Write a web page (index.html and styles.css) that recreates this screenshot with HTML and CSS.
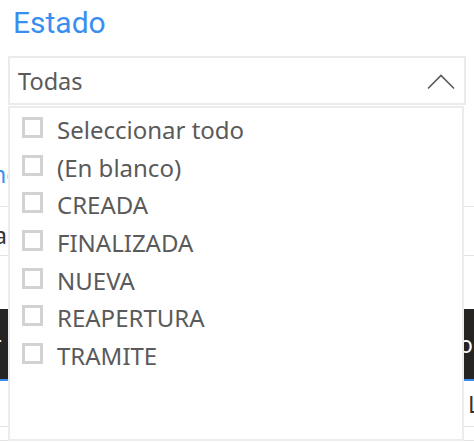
FILE: index.html
```html
<!DOCTYPE html>
<html lang="es">
<head>
<meta charset="utf-8">
<title>Estado</title>
<link rel="stylesheet" href="styles.css">
</head>
<body>
<div class="page">
  <h1 class="title">Estado</h1>
  <div class="dropdown">
    <span class="dropdown-value">Todas</span>
    <svg class="chevron" width="28" height="16" viewBox="0 0 28 16"><polyline points="1,14.5 14,1.5 27,14.5" fill="none" stroke="#5a5a5a" stroke-width="1.6"/></svg>
  </div>
  <div class="behind">
    <div class="bg-row bg-row-title"><span class="bg-blue">no</span></div>
    <div class="bg-row bg-row-a"><span class="bg-dark">a</span></div>
    <div class="bg-gap"></div>
    <div class="bg-bar"><span class="bar-left">r</span><span class="bar-right">o</span></div>
    <div class="bg-row bg-row-l"><span class="bg-l">L</span></div>
    <div class="bg-row bg-row-last"></div>
  </div>
  <ul class="list">
    <li class="item"><span class="box"></span><span class="label">Seleccionar todo</span></li>
    <li class="item"><span class="box"></span><span class="label">(En blanco)</span></li>
    <li class="item"><span class="box"></span><span class="label">CREADA</span></li>
    <li class="item"><span class="box"></span><span class="label">FINALIZADA</span></li>
    <li class="item"><span class="box"></span><span class="label">NUEVA</span></li>
    <li class="item"><span class="box"></span><span class="label">REAPERTURA</span></li>
    <li class="item"><span class="box"></span><span class="label">TRAMITE</span></li>
  </ul>
</div>
</body>
</html>
```
FILE: styles.css
```css
* { box-sizing: border-box; }
html, body { margin: 0; padding: 0; background: #fff; }
body { font-family: "Noto Sans", "Open Sans", sans-serif; overflow: hidden; }
.page { position: relative; width: 474px; height: 442px; overflow: hidden; }

.title {
  margin: 0;
  padding: 3px 0 0 13px;
  height: 56px;
  font-family: Roboto, "Noto Sans", sans-serif;
  font-weight: 400;
  font-size: 30px;
  line-height: 40px;
  color: #3a8ef0;
}

.dropdown {
  margin-left: 8px;
  width: 458px;
  height: 49px;
  border: 2px solid #ebebeb;
  display: flex;
  align-items: center;
  justify-content: space-between;
  padding: 0 9px 0 8px;
}
.dropdown-value { font-size: 23.5px; color: #5a5a5a; line-height: 1; padding-top: 3px; }
.chevron { display: block; margin-top: 2px; }

.behind { font-size: 23px; }
.bg-row { border-bottom: 1px solid #e3e3e3; display: flex; align-items: flex-end; justify-content: space-between; }
.bg-row-title { height: 102px; padding-bottom: 20px; }
.bg-blue { color: #3a8ef0; margin-left: -8px; line-height: 1; }
.bg-row-a { height: 49px; padding-bottom: 8px; }
.bg-dark { color: #333; margin-left: -6px; line-height: 1; }
.bg-gap { height: 53px; }
.bg-bar {
  height: 72px;
  background: #252423;
  border-bottom: 2px solid #3a8ef0;
  display: flex;
  align-items: center;
  justify-content: space-between;
  color: #fff;
  font-size: 23px;
}
.bar-left { margin-left: -8px; }
.bar-right { margin-right: 1px; }
.bg-row-l { height: 46px; justify-content: flex-end; padding-bottom: 10px; }
.bg-l { color: #333; margin-right: -6px; line-height: 1; }
.bg-row-last { height: 14px; }

.list {
  position: absolute;
  top: 106px;
  left: 8px;
  width: 456px;
  height: 335px;
  margin: 0;
  padding: 1px 0 0 12px;
  list-style: none;
  background: #fff;
  border: 2px solid #ececec;
}
.item {
  height: 37.6px;
  display: flex;
  align-items: center;
}
.box {
  width: 21px;
  height: 21px;
  border: 3px solid #d2d2d2;
  flex: none;
}
.label {
  margin-left: 14px;
  font-size: 24px;
  color: #5a5a5a;
  line-height: 1;
  padding-top: 5px;
}
```
